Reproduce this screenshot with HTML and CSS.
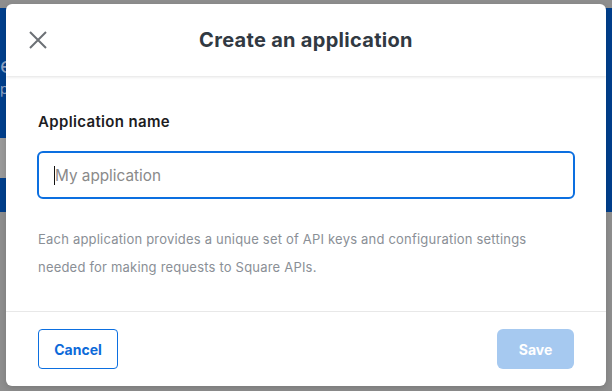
FILE: index.html
```html
<!DOCTYPE html>
<html lang="en">

<head>
    <meta charset="UTF-8">
    <title>Create an application</title>
    <link rel="stylesheet" href="styles.css">
</head>

<body>

    <div class="page">
        <div class="hero">
            <div class="hero-title">e</div>
            <div class="hero-sub">p</div>
            <div class="hero-field"></div>
        </div>
    </div>

    <div class="modal">
        <div class="modal-header">
            <button class="close" aria-label="Close">
                <svg width="20" height="20" viewBox="0 0 20 20">
                    <path d="M2 2 L18 18 M18 2 L2 18" stroke="#6c7075" stroke-width="2" fill="none" />
                </svg>
            </button>
            <h2>Create an application</h2>
        </div>

        <div class="modal-body">
            <label class="field-label" for="appName">Application name</label>
            <div class="field">
                <span class="caret"></span>
                <input id="appName" type="text" placeholder="My application">
            </div>
            <p class="help">Each application provides a unique set of API keys and configuration settings<br>
                needed for making requests to Square APIs.</p>
        </div>

        <div class="modal-footer">
            <button class="btn btn-cancel">Cancel</button>
            <button class="btn btn-save">Save</button>
        </div>
    </div>

</body>

</html>
```

FILE: styles.css
```css
body {
    margin: 0;
    font-family: 'Inter', 'Noto Sans', sans-serif;
    background-color: #8e8e8e;
    overflow: hidden;
}

/* page behind the dialog */
.page {
    padding-top: 8px;
}

.hero {
    position: relative;
    height: 204px;
    background-color: #003f8c;
}

.hero-title {
    padding: 44px 0 0 0;
    font-size: 22px;
    color: #8fa3c4;
    line-height: 26px;
}

.hero-sub {
    margin-top: 2px;
    font-size: 14px;
    color: #8fa3c4;
}

.hero-field {
    position: absolute;
    left: 0;
    top: 130px;
    width: 10px;
    height: 40px;
    background-color: #9a9a9a;
}

/* dialog */
.modal {
    position: absolute;
    left: 6px;
    top: 4px;
    width: 600px;
    background: #fff;
    border-radius: 6px;
    box-shadow: 0 2px 6px rgba(0, 0, 0, 0.15);
    overflow: hidden;
}

.modal-header {
    position: relative;
    height: 72px;
    display: flex;
    align-items: center;
    justify-content: center;
    box-shadow: 0 1px 3px rgba(0, 0, 0, 0.12);
}

.modal-header h2 {
    margin: 0;
    font-size: 20px;
    font-weight: 700;
    color: #313942;
    letter-spacing: 0.3px;
}

.close {
    position: absolute;
    left: 22px;
    top: 26px;
    padding: 0;
    border: none;
    background: none;
    width: 20px;
    height: 20px;
}

.close svg {
    display: block;
}

.modal-body {
    padding: 36px 31px 30px;
}

.field-label {
    display: block;
    margin-left: 1px;
    font-size: 15px;
    line-height: 20px;
    font-weight: 600;
    letter-spacing: 0.35px;
    color: #1d1d1f;
}

.field {
    position: relative;
    margin-top: 19px;
}

.field input {
    box-sizing: border-box;
    width: 100%;
    height: 48px;
    padding: 0 16px;
    border: 2px solid #0c6fe0;
    border-radius: 6px;
    font-family: inherit;
    font-size: 15.3px;
    color: #1d1d1f;
    outline: none;
}

.field input::placeholder {
    color: #8a8a8a;
}

.caret {
    position: absolute;
    left: 17px;
    top: 15px;
    width: 1px;
    height: 19px;
    background: #111;
}

.help {
    margin: 26px 0 0 1px;
    font-size: 13px;
    line-height: 28px;
    letter-spacing: 0.2px;
    white-space: nowrap;
    color: #8a8f96;
}

.modal-footer {
    display: flex;
    justify-content: space-between;
    padding: 17px 32px 17px 32px;
    border-top: 1px solid #e8e8e8;
}

.btn {
    height: 40px;
    border-radius: 4px;
    font-family: inherit;
    font-size: 14px;
    font-weight: 700;
}

.btn-cancel {
    width: 80px;
    background: #fff;
    border: 1px solid #0c6fe0;
    color: #0c6ad9;
}

.btn-save {
    width: 77px;
    border: none;
    border-radius: 6px;
    background: #a6c9f0;
    color: #fff;
}
```
